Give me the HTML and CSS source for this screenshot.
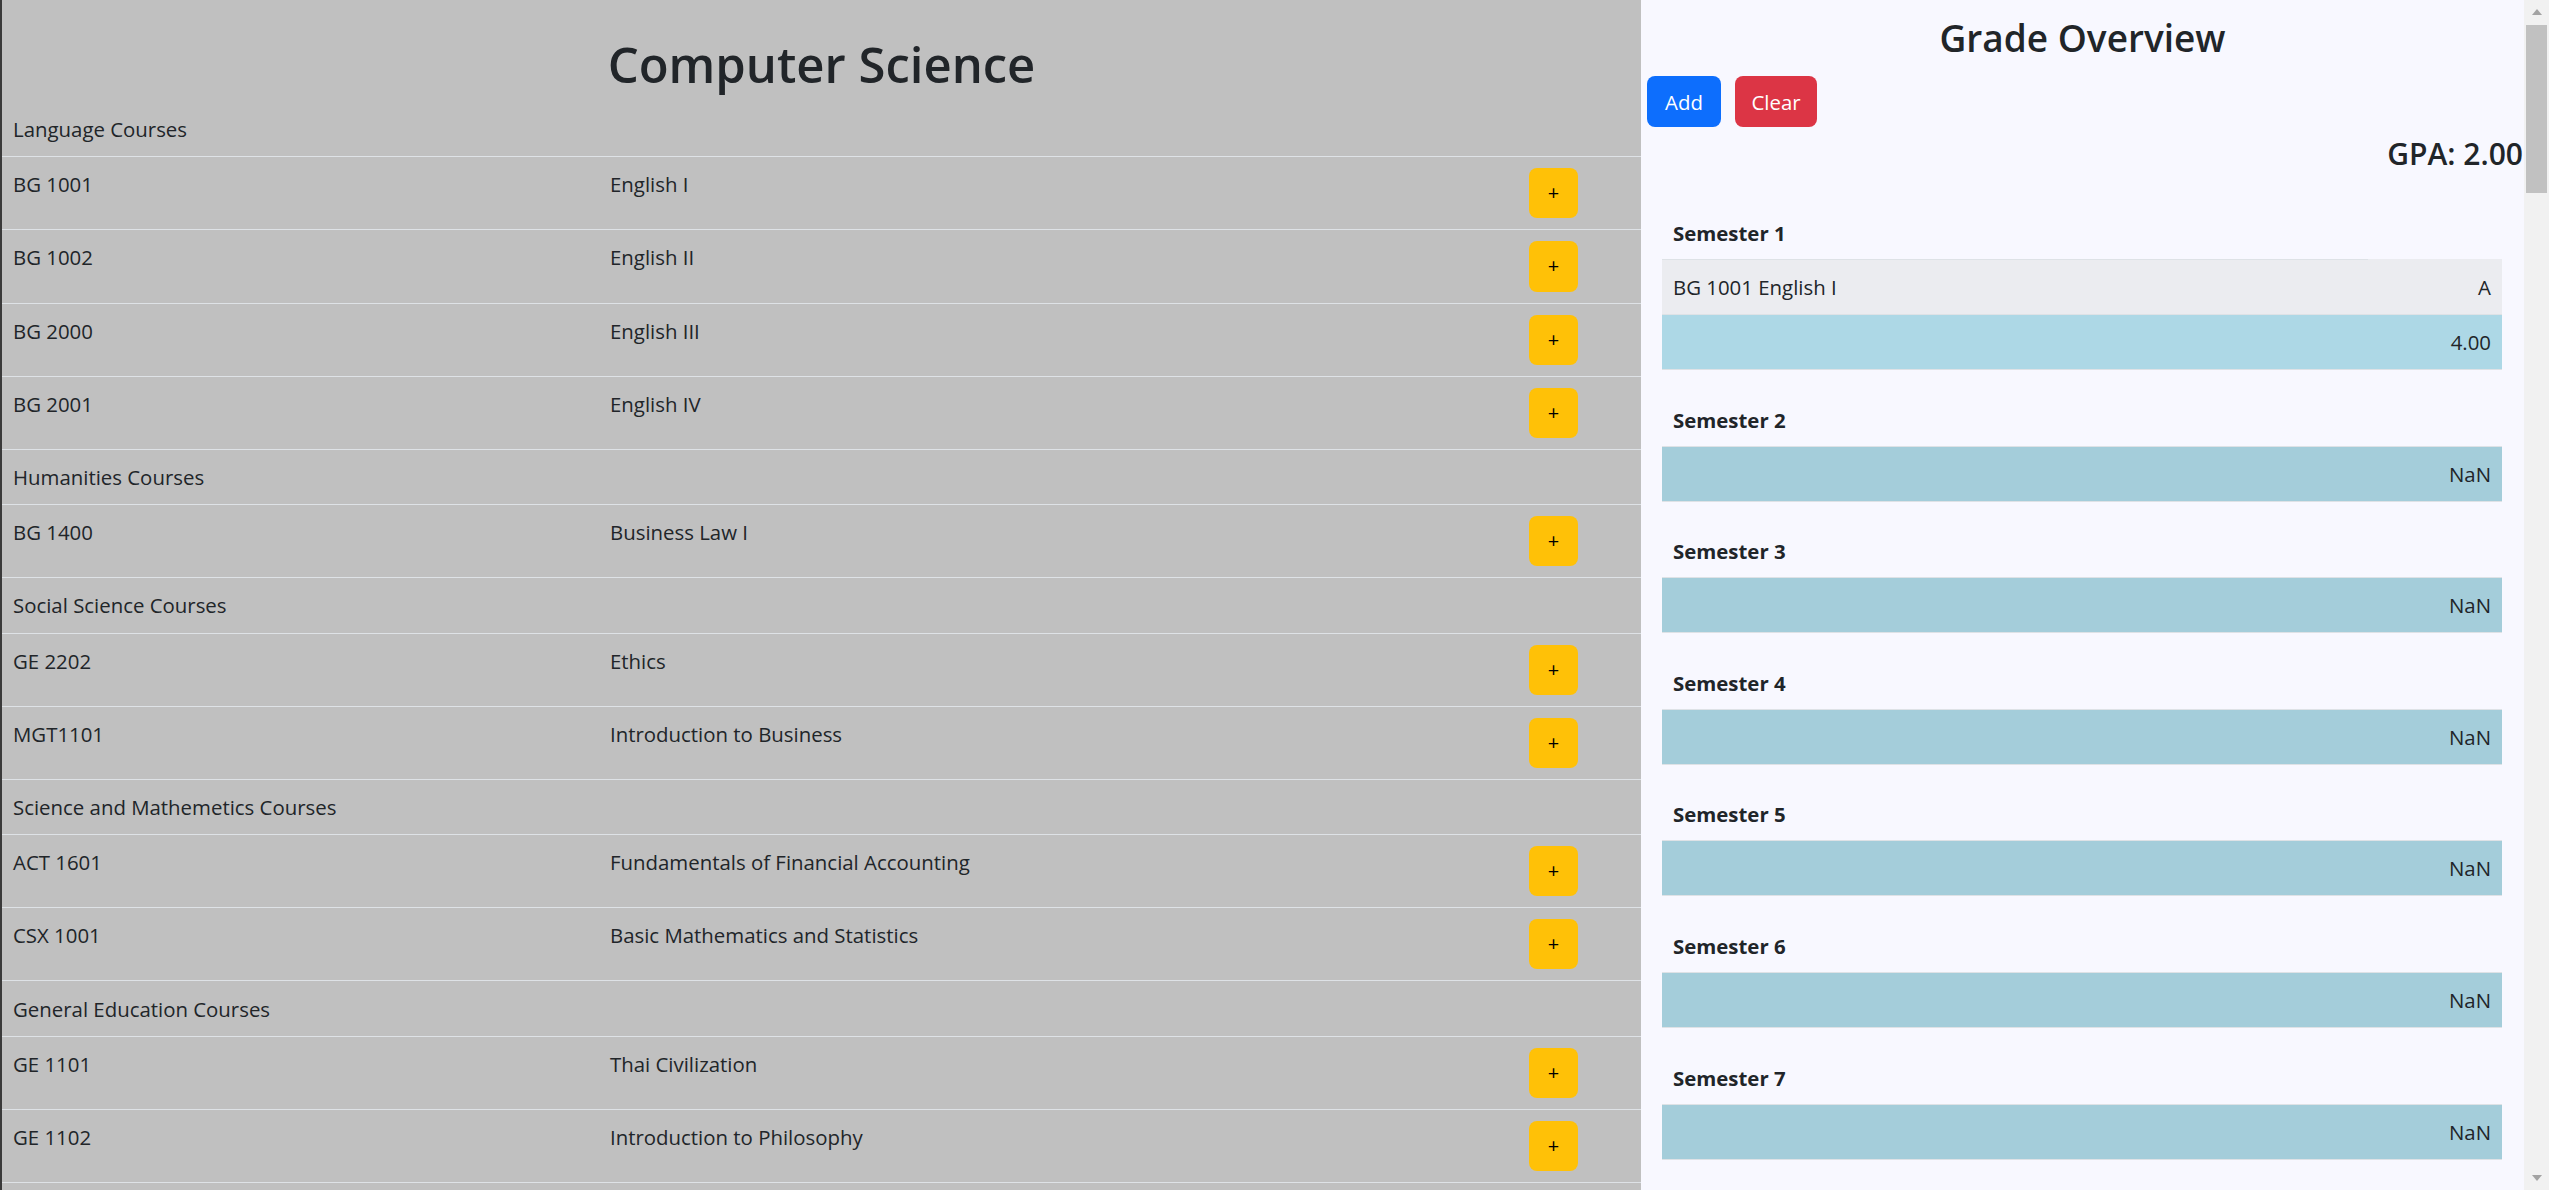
FILE: index.html
```html
<!DOCTYPE html>
<html lang="en">
<head>
<meta charset="utf-8">
<title>Computer Science – Grade Overview</title>
<link rel="stylesheet" href="styles.css">
</head>
<body>
<div class="layout">
  <main class="catalog">
    <h1 class="catalog-title">Computer Science</h1>
    <table class="course-table">
      <colgroup><col class="c-code"><col class="c-name"><col class="c-act"></colgroup>
      <tbody>
        <tr class="cat"><td colspan="3">Language Courses</td></tr>
        <tr><td>BG 1001</td><td>English I</td><td><button class="plus">+</button></td></tr>
        <tr><td>BG 1002</td><td>English II</td><td><button class="plus">+</button></td></tr>
        <tr><td>BG 2000</td><td>English III</td><td><button class="plus">+</button></td></tr>
        <tr><td>BG 2001</td><td>English IV</td><td><button class="plus">+</button></td></tr>
        <tr class="cat"><td colspan="3">Humanities Courses</td></tr>
        <tr><td>BG 1400</td><td>Business Law I</td><td><button class="plus">+</button></td></tr>
        <tr class="cat"><td colspan="3">Social Science Courses</td></tr>
        <tr><td>GE 2202</td><td>Ethics</td><td><button class="plus">+</button></td></tr>
        <tr><td>MGT1101</td><td>Introduction to Business</td><td><button class="plus">+</button></td></tr>
        <tr class="cat"><td colspan="3">Science and Mathemetics Courses</td></tr>
        <tr><td>ACT 1601</td><td>Fundamentals of Financial Accounting</td><td><button class="plus">+</button></td></tr>
        <tr><td>CSX 1001</td><td>Basic Mathematics and Statistics</td><td><button class="plus">+</button></td></tr>
        <tr class="cat"><td colspan="3">General Education Courses</td></tr>
        <tr><td>GE 1101</td><td>Thai Civilization</td><td><button class="plus">+</button></td></tr>
        <tr><td>GE 1102</td><td>Introduction to Philosophy</td><td><button class="plus">+</button></td></tr>
      </tbody>
    </table>
  </main>

  <aside class="overview">
    <h2 class="overview-title">Grade Overview</h2>
    <div class="actions">
      <button class="btn btn-add">Add</button>
      <button class="btn btn-clear">Clear</button>
    </div>
    <div class="gpa">GPA: 2.00</div>

    <div class="semesters">
      <section class="semester">
        <div class="sem-label">Semester 1</div>
        <div class="sem-row striped first"><span>BG 1001 English I</span><span>A</span></div>
        <div class="sem-row total"><span></span><span>4.00</span></div>
      </section>
      <section class="semester">
        <div class="sem-label">Semester 2</div>
        <div class="sem-row nan"><span></span><span>NaN</span></div>
      </section>
      <section class="semester">
        <div class="sem-label">Semester 3</div>
        <div class="sem-row nan"><span></span><span>NaN</span></div>
      </section>
      <section class="semester">
        <div class="sem-label">Semester 4</div>
        <div class="sem-row nan"><span></span><span>NaN</span></div>
      </section>
      <section class="semester">
        <div class="sem-label">Semester 5</div>
        <div class="sem-row nan"><span></span><span>NaN</span></div>
      </section>
      <section class="semester">
        <div class="sem-label">Semester 6</div>
        <div class="sem-row nan"><span></span><span>NaN</span></div>
      </section>
      <section class="semester">
        <div class="sem-label">Semester 7</div>
        <div class="sem-row nan"><span></span><span>NaN</span></div>
      </section>
    </div>
  </aside>
</div>

<div class="scrollbar" aria-hidden="true">
  <div class="arrow-up"></div>
  <div class="thumb"></div>
  <div class="arrow-down"></div>
</div>
</body>
</html>
```

FILE: styles.css
```css
html, body {
  margin: 0;
  height: 1190px;
  overflow: hidden;
}

body {
  box-sizing: border-box;
  border-left: 2px solid #3a3a3a;
  background: #c0c0c0;
  font-family: "Open Sans", "Noto Sans", sans-serif;
  font-size: 20.4px;
  line-height: 32px;
  color: #212529;
}

.layout {
  display: grid;
  grid-template-columns: 1639px 883px;
  height: 1190px;
}

/* ---------- left: catalog ---------- */
.catalog {
  background: #c0c0c0;
}

.catalog-title {
  margin: 34.5px 0 8.5px;
  font-size: 49px;
  line-height: 59px;
  font-weight: 600;
  text-align: center;
}

.course-table {
  width: 100%;
  border-collapse: collapse;
  table-layout: fixed;
}

.c-code { width: 597px; }
.c-name { width: 919px; }
.c-act  { width: 123px; }

.course-table td {
  padding: 11px;
  vertical-align: top;
  border-bottom: 1px solid #dee2e6;
}

.course-table .cat td {
  padding: 11.15px 11px;
}

.plus {
  display: flex;
  align-items: center;
  justify-content: center;
  width: 49px;
  height: 50.15px;
  padding: 0;
  border: none;
  border-radius: 8px;
  background: #ffc107;
  color: #000;
  font: inherit;
  font-size: 20px;
}

/* ---------- right: overview ---------- */
.overview {
  background: #f8f8ff;
}

.overview-title {
  margin: 15px 0 16px;
  font-size: 37px;
  line-height: 45px;
  font-weight: 600;
  text-align: center;
}

.actions {
  display: flex;
  gap: 14px;
  padding-left: 6px;
}

.btn {
  height: 51px;
  padding: 0;
  border: none;
  border-radius: 8px;
  color: #fff;
  font: inherit;
}

.btn-add { width: 74px; background: #0d6efd; }
.btn-clear { width: 82px; background: #dc3545; }

.gpa {
  margin: 9px 1px 0 0;
  text-align: right;
  font-size: 30px;
  line-height: 36px;
  font-weight: 600;
}

.semesters {
  padding: 33px 22px 0 21px;
}

.semester {
  margin-bottom: 21.6px;
}

.sem-label {
  padding: 12px 11px 10px;
  font-weight: 700;
}

.sem-row {
  display: flex;
  justify-content: space-between;
  padding: 11px;
  border-bottom: 1px solid #dee2e6;
}

.sem-row.striped { background: #ebecf0; }
.sem-row.first {
  padding-top: 12px;
  background: linear-gradient(#dee2e6, #dee2e6) no-repeat 0 0 / 706px 1px, #ebecf0;
}
.sem-row.total { background: #add8e6; }
.sem-row.nan {
  background: #a4cdda;
  border-top: 1px solid #dee2e6;
}

/* ---------- window scrollbar ---------- */
.scrollbar {
  position: fixed;
  top: 0;
  right: 0;
  width: 25px;
  height: 1190px;
  background: #f1f1f1;
  display: flex;
  flex-direction: column;
  align-items: center;
}

.arrow-up {
  margin-top: 9px;
  width: 0;
  height: 0;
  border-left: 5px solid transparent;
  border-right: 5px solid transparent;
  border-bottom: 6px solid #a3a3a3;
}

.thumb {
  margin-top: 10px;
  width: 21px;
  height: 168px;
  background: #c1c1c1;
}

.arrow-down {
  margin-top: auto;
  margin-bottom: 9px;
  width: 0;
  height: 0;
  border-left: 5px solid transparent;
  border-right: 5px solid transparent;
  border-top: 6px solid #a3a3a3;
}
```
